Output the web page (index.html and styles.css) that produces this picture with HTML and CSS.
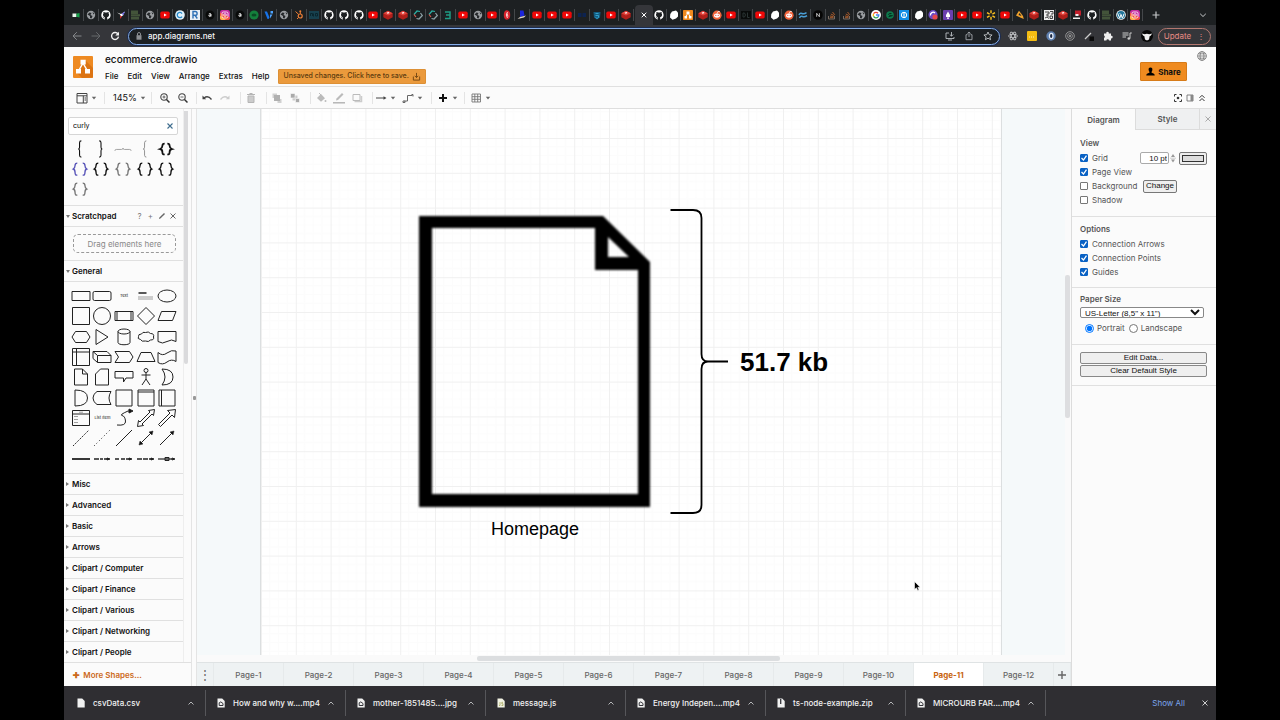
FILE: index.html
```html
<!DOCTYPE html>
<html lang="en">
<head>
<meta charset="utf-8">
<title>ecommerce.drawio</title>
<link rel="stylesheet" href="styles.css">
</head>
<body>
<svg class="sprite" aria-hidden="true">
  <symbol id="globe" viewBox="0 0 10 10"><circle cx="5" cy="5" r="4.2" fill="#9a9da1"/><path d="M1.500 4.500l2-2 2 .5-1 2 2 1-1 2.500-1.500-.5V6zM6.500 2l2 1.500-1 1z" fill="#25282b"/></symbol>
  <symbol id="gh" viewBox="0 0 16 16"><path fill="#fff" d="M8 .5a7.500 7.500 0 0 0-2.400 14.600c.4.1.5-.2.5-.4v-1.500c-2 .5-2.500-.9-2.500-.9-.4-.9-.9-1.100-.9-1.100-.7-.5 0-.5 0-.5.8.1 1.200.8 1.200.8.7 1.200 1.800.9 2.200.7.1-.5.3-.9.500-1.100-1.700-.2-3.400-.8-3.400-3.700 0-.8.3-1.500.8-2-.1-.2-.4-1 .1-2.100 0 0 .6-.2 2.100.8a7 7 0 0 1 3.700 0c1.500-1 2.100-.8 2.100-.8.5 1.100.2 1.900.1 2.100.5.5.8 1.200.8 2 0 2.900-1.700 3.500-3.400 3.700.3.200.5.700.5 1.400v2.100c0 .2.1.5.5.4A7.500 7.500 0 0 0 8 .5z"/></symbol>
  <symbol id="yt" viewBox="0 0 10 10"><rect x=".3" y="1.600" width="9.400" height="6.800" rx="1.600" fill="#f00808"/><path d="M4 3.500L6.800 5 4 6.500z" fill="#fff"/></symbol>
  <symbol id="meet" viewBox="0 0 10 10"><rect x="1.500" y="3.500" width="4" height="3.500" fill="#e8f4ec"/><path d="M5.500 3.500h1L8.500 3v4.500l-2-.5h-1z" fill="#16a34a"/></symbol>
  <symbol id="bird" viewBox="0 0 10 10"><path d="M1 2.500l4 1.500 4-2.500-2 4-2 1-1-2z" fill="#fff"/><path d="M4 6l2 0-1.500 3z" fill="#e33"/><path d="M6 3.500l3-2-2 4z" fill="#5b51d8"/></symbol>
  <symbol id="moss" viewBox="0 0 10 10"><path d="M1 .5h7V4H1zM1 4.300h9v2H1zM1 6.700h8v2.800H1z" fill="#43543a"/></symbol>
  <symbol id="cring" viewBox="0 0 10 10"><circle cx="5" cy="5" r="4.800" fill="#dff0fa"/><path d="M7 3.500a2.600 2.600 0 1 0 0 3" fill="none" stroke="#2387c9" stroke-width="1.300"/></symbol>
  <symbol id="rbox" viewBox="0 0 10 10"><rect width="10" height="10" fill="#e8eef5"/><path d="M3 8.500v-7h2.200a1.900 1.900 0 0 1 0 3.800H3M5 5.300l2.300 3.200" fill="none" stroke="#2d6fb5" stroke-width="1.400"/></symbol>
  <symbol id="adisc" viewBox="0 0 10 10"><circle cx="5" cy="5" r="4.500" fill="#090a0a"/><path d="M3.800 4q1.200-.8 2.200 0v2.500M6 5q-2.300-.2-2.300.9T6 5.800" fill="none" stroke="#fff" stroke-width=".9"/></symbol>
  <symbol id="ig" viewBox="0 0 10 10"><rect width="10" height="10" rx="2.200" fill="#c52fa0"/><path d="M0 2.500l10 5v.3A2.200 2.200 0 0 1 7.800 10H2.200A2.200 2.200 0 0 1 0 7.800z" fill="#f4533c"/><path d="M0 5.500L6 10H2.200A2.200 2.200 0 0 1 0 7.800z" fill="#fdb24a"/><rect x="2" y="2" width="6" height="6" rx="1.500" fill="none" stroke="#fff" stroke-width=".8"/><circle cx="5" cy="5" r="1.300" fill="none" stroke="#fff" stroke-width=".8"/></symbol>
  <symbol id="green" viewBox="0 0 10 10"><circle cx="5" cy="5" r="4.600" fill="#14803c"/><ellipse cx="5" cy="5" rx="2.500" ry="1.500" fill="#0b4a25"/></symbol>
  <symbol id="vee" viewBox="0 0 10 10"><path d="M.5 1.500H3l2.500 6-1 1.500H3.500z" fill="#1873e8"/><path d="M6.500 1h2.500v2.500H6.500zM6 4.500h2.500L6 8.500z" fill="#4da3ff"/></symbol>
  <symbol id="hub" viewBox="0 0 10 10"><g fill="none" stroke="#f07f35"><circle cx="6.200" cy="6" r="2" stroke-width="1.200"/><path d="M1.500 1.500L4.800 4.500M6.300 1v3M3 9l1.700-1.600"/></g><circle cx="6.300" cy="1.200" r="1" fill="#f07f35"/></symbol>
  <symbol id="teal" viewBox="0 0 10 10"><rect y="1" width="10" height="8" fill="#17404e"/><path d="M1.500 6V3.500h2V6m1-2.500v3m2-3h2V6h-2z" fill="none" stroke="#0a262f"/></symbol>
  <symbol id="redis" viewBox="0 0 10 10"><path d="M.3 3.500L5 .8l4.700 2.500v4L5 9.700.3 7.300z" fill="#b01f1a"/><path d="M.3 3.300L5 .8l4.700 2.400L5 5.500z" fill="#e0413a"/><path d="M3.500 2.800l2-.7 1 .8-1.800.8z" fill="#fff"/></symbol>
  <symbol id="swirl" viewBox="0 0 10 10"><path d="M7 1.500L4 1 1 4.500" fill="none" stroke="#2bb0a5" stroke-width="1.200"/><path d="M1 4.500L3 7" fill="none" stroke="#d95a50" stroke-width="1.200"/><path d="M7.500 3L9.300 5.500 6 9 3.500 8.500" fill="none" stroke="#8fa3a8" stroke-width="1.200"/></symbol>
  <symbol id="three" viewBox="0 0 10 10"><path d="M2 2h5v3H3h4v3.500H2" fill="none" stroke="#1e9b84" stroke-width="1.500"/></symbol>
  <symbol id="feather" viewBox="0 0 10 10"><ellipse cx="5" cy="5" rx="3.200" ry="4.700" fill="#d8232c"/><path d="M5.500 2Q3 5 5.500 8M5 3.500l1 3" fill="none" stroke="#fff" stroke-width=".8"/></symbol>
  <symbol id="boat" viewBox="0 0 10 10"><path d="M3 .5h3.500l1 5L3 7z" fill="#1c25dd"/><path d="M.5 9L3 7l6-1.500-2 2z" fill="#ddd2c7"/></symbol>
  <symbol id="navy" viewBox="0 0 10 10"><path d="M1 3h3.500v4H1zM5.500 3H9v4H5.500z" fill="#0d2350"/></symbol>
  <symbol id="shield" viewBox="0 0 10 10"><path d="M1.500 2h7L8 7.500 5 9.500 2 7.500z" fill="#135d82"/><path d="M3.500 3.500h3M3.500 5.500h3v2l-1.500 1-1.500-1" fill="none" stroke="#3bb0dc" stroke-width=".8"/></symbol>
  <symbol id="blob" viewBox="0 0 10 10"><path d="M3 1.500L7 .5l2 2v4L7 8.500 3.500 9.700 1 7.500 1.300 4z" fill="#fff"/></symbol>
  <symbol id="dio" viewBox="0 0 20 20"><rect width="20" height="20" rx="1.500" fill="#f08a1e"/><path d="M10 6L5 14M10 6l5 8" stroke="#fff" stroke-width="2"/><path d="M7 3h6v5H7zM3 12h5v5H3zM12 12h5v5h-5z" fill="#fff"/></symbol>
  <symbol id="reddit" viewBox="0 0 10 10"><circle cx="5" cy="5.200" r="4.600" fill="#f1643c"/><ellipse cx="5" cy="5.600" rx="3" ry="2.100" fill="#fff"/><path d="M5 3.700L6 1.500l2 .2" fill="none" stroke="#fff" stroke-width=".7"/><circle cx="3.800" cy="5.300" r=".6" fill="#e33"/><circle cx="6.200" cy="5.300" r=".6" fill="#e33"/></symbol>
  <symbol id="dark" viewBox="0 0 10 10"><rect y="1" width="10" height="8" fill="#090b0b"/><path d="M2 3v4h1.500L4.500 5 3.500 3zM6.500 2.500v5h2" fill="none" stroke="#2b3434"/></symbol>
  <symbol id="tw" viewBox="0 0 10 10"><path d="M1 5q1-2.500 3-1.500t4.500-.8M1.500 8q1-2.500 3-1.500T9 5.700" fill="none" stroke="#4a9fd6" stroke-width="1.500"/></symbol>
  <symbol id="next" viewBox="0 0 10 10"><circle cx="5" cy="5" r="4.800" fill="#050505"/><path d="M3.700 6.800V3.300l2.700 3.500V3.200" fill="none" stroke="#ddd" stroke-width=".8"/></symbol>
  <symbol id="so" viewBox="0 0 10 10"><path d="M1.500 6v3h6V6" fill="none" stroke="#796c63"/><path d="M3 7.700h3.500M3 6l3.500.6M3.800 4l3.200 1.500M5.500 2l2.300 2.800" stroke="#a85a2b"/></symbol>
  <symbol id="google" viewBox="0 0 10 10"><circle cx="5" cy="5" r="5" fill="#fff"/><g fill="none" stroke-width="1.300"><path d="M7 3.200A2.800 2.800 0 0 0 2.600 3.700" stroke="#ea4335"/><path d="M2.600 3.700a2.800 2.800 0 0 0 0 2.700" stroke="#fbbc05"/><path d="M2.600 6.400A2.800 2.800 0 0 0 7 7" stroke="#34a853"/><path d="M7 7q.8-.8.800-2H5" stroke="#4285f4"/></g></symbol>
  <symbol id="sgreen" viewBox="0 0 10 10"><circle cx="5" cy="5" r="3.800" fill="#0e7a4d"/><path d="M6.500 3.500q-3-.5-3 .8T6.500 5.500 3.500 6.700" fill="none" stroke="#052e20"/></symbol>
  <symbol id="dbox" viewBox="0 0 10 10"><rect width="10" height="10" fill="#128fe6"/><circle cx="5" cy="5" r="2.700" fill="none" stroke="#fff"/><path d="M5 2v6" stroke="#fff"/></symbol>
  <symbol id="purp" viewBox="0 0 10 10"><circle cx="5" cy="4.700" r="4.600" fill="#6b4bc4"/><path d="M2.500 5.500A2.700 2.700 0 0 1 7 3" fill="none" stroke="#fff" stroke-width="1.300"/><circle cx="7" cy="7" r="2.600" fill="#e5484d"/></symbol>
  <symbol id="bell" viewBox="0 0 10 10"><rect width="10" height="10" rx="1" fill="#6b3fae"/><path d="M5 1.500L7 5v2H3V5zM4 7.500h2v1.200H4z" fill="#fff"/></symbol>
  <symbol id="spark" viewBox="0 0 10 10"><path d="M5 .3v3M5 6.700v3M1 2.700l2.600 1.500M6.400 5.800L9 7.300M1 7.300l2.600-1.500M6.400 4.200L9 2.700" stroke="#ffc220" stroke-width="1.400"/></symbol>
  <symbol id="tri" viewBox="0 0 10 10"><path d="M1 5.500L4 .7 8 6l.8 3-3-1.200z" fill="#f0a22d"/><path d="M3.500 5L4.500 3l2 3z" fill="#1d2124"/></symbol>
  <symbol id="qr" viewBox="0 0 10 10"><rect width="10" height="10" fill="#eee"/><path d="M1 2h4v2H3v2h2M6 1.500h3V4H7M1 8l2-1 2 1.500M6 6h2.500v2.500H6z" fill="none" stroke="#333" stroke-width=".9"/></symbol>
  <symbol id="rw" viewBox="0 0 10 10"><path d="M3 .5h6v5H3z" fill="#c2202c"/><path d="M3.500 4h3v2h-3zM1 7.500h7v1.500H1z" fill="#eee"/></symbol>
  <symbol id="wp" viewBox="0 0 10 10"><circle cx="5" cy="5" r="4.800" fill="#fff"/><circle cx="5" cy="5" r="4" fill="#21759b"/><path d="M1.700 3.300l2 5L5 4.500l1.400 3.700 1.700-4.500M3.700 3.300l1 1" fill="none" stroke="#fff"/></symbol>
  <symbol id="caret" viewBox="0 0 6 6"><path d="M.8 1.800h4.400L3 4.500z" fill="#666"/></symbol>
  <symbol id="up" viewBox="0 0 8 8"><path d="M1.500 5.500L4 3l2.500 2.500" fill="none" stroke="#b5b6b9"/></symbol>
  <symbol id="file" viewBox="0 0 8 10"><path d="M.5.5h4.700L7.700 3v6.500H.5z" fill="#f1f1f1"/></symbol>
  <symbol id="media" viewBox="0 0 8 10"><path d="M.5.5h4.700L7.700 3v6.500H.5z" fill="#f1f1f1"/><path d="M2.200 7.500V4.800l1.600-.9 2.200 1.600v2z" fill="none" stroke="#34343a"/></symbol>
  <symbol id="script" viewBox="0 0 8 10"><path d="M.5.5h4.700L7.700 3v6.500H.5z" fill="#f3f3e4"/><path d="M3 4v3.500H2M6 4.300H4.800v1.500H6v1.700H4.500" fill="none" stroke="#a3a65a" stroke-width=".8"/></symbol>
  <symbol id="zip" viewBox="0 0 8 10"><path d="M.5.5h4.700L7.700 3v6.500H.5z" fill="#f1f1f1"/><path d="M3.700 1v5" stroke="#34343a" stroke-width="1.300"/></symbol>
  <symbol id="braces" viewBox="0 0 20 16"><path d="M7 1.500Q4.500 1.500 4.500 4T2.500 8q2 .5 2 4T7 14.500M13 1.500q2.500 0 2.500 2.500T17.500 8q-2 .5-2 4T13 14.500" fill="none" stroke="currentColor" stroke-width="1.500"/></symbol>
  <symbol id="braces-bold" viewBox="0 0 20 16"><path d="M8.500 2Q6 2 6 4.500T3.500 8Q6 8.500 6 11.500T8.500 14M11.500 2Q14 2 14 4.500T16.500 8q-2.500.5-2.500 3.500T11.500 14" fill="none" stroke="currentColor" stroke-width="2"/></symbol>
</svg>

<div class="screen">
  <nav class="tabstrip" aria-label="Browser tabs">
    <div class="tabs tabs-a">
      <button><svg><use href="#meet"/></svg></button><button><svg><use href="#globe"/></svg></button><button><svg><use href="#gh"/></svg></button><button><svg><use href="#bird"/></svg></button><button><svg><use href="#moss"/></svg></button><button><svg><use href="#globe"/></svg></button><button><svg><use href="#yt"/></svg></button><button><svg><use href="#cring"/></svg></button><button><svg><use href="#rbox"/></svg></button><button><svg><use href="#adisc"/></svg></button>
      <button><svg><use href="#ig"/></svg></button><button><svg><use href="#adisc"/></svg></button><button><svg><use href="#green"/></svg></button><button><svg><use href="#vee"/></svg></button><button><svg><use href="#globe"/></svg></button><button><svg><use href="#hub"/></svg></button><button><svg><use href="#teal"/></svg></button><button><svg><use href="#gh"/></svg></button><button><svg><use href="#gh"/></svg></button><button><svg><use href="#gh"/></svg></button>
      <button><svg><use href="#yt"/></svg></button><button><svg><use href="#redis"/></svg></button><button><svg><use href="#redis"/></svg></button><button><svg><use href="#swirl"/></svg></button><button><svg><use href="#swirl"/></svg></button><button><svg><use href="#three"/></svg></button><button><svg><use href="#yt"/></svg></button><button><svg><use href="#globe"/></svg></button><button><svg><use href="#yt"/></svg></button><button><svg><use href="#feather"/></svg></button>
      <button><svg><use href="#boat"/></svg></button><button><svg><use href="#yt"/></svg></button><button><svg><use href="#yt"/></svg></button><button><svg><use href="#yt"/></svg></button><button><svg><use href="#navy"/></svg></button><button><svg><use href="#shield"/></svg></button><button><svg><use href="#yt"/></svg></button><button><svg><use href="#redis"/></svg></button>
    </div>
    <button class="tab-active" aria-label="Close tab"><svg viewBox="0 0 10 10"><path d="M2.700 2.700l4.600 4.600M7.300 2.700L2.700 7.300" stroke="#fff"/></svg></button>
    <div class="tabs tabs-b">
      <button><svg><use href="#gh"/></svg></button><button><svg><use href="#blob"/></svg></button><button><svg><use href="#dio"/></svg></button><button><svg><use href="#redis"/></svg></button><button><svg><use href="#reddit"/></svg></button><button><svg><use href="#yt"/></svg></button><button><svg><use href="#dark"/></svg></button><button><svg><use href="#yt"/></svg></button><button><svg><use href="#blob"/></svg></button><button><svg><use href="#reddit"/></svg></button>
      <button><svg><use href="#tw"/></svg></button><button><svg><use href="#next"/></svg></button><button><svg><use href="#so"/></svg></button><button><svg><use href="#so"/></svg></button><button><svg><use href="#globe"/></svg></button><button><svg><use href="#google"/></svg></button><button><svg><use href="#sgreen"/></svg></button><button><svg><use href="#dbox"/></svg></button><button><svg><use href="#blob"/></svg></button><button><svg><use href="#purp"/></svg></button>
      <button><svg><use href="#bell"/></svg></button><button><svg><use href="#yt"/></svg></button><button><svg><use href="#yt"/></svg></button><button><svg><use href="#spark"/></svg></button><button><svg><use href="#yt"/></svg></button><button><svg><use href="#tri"/></svg></button><button><svg><use href="#redis"/></svg></button><button><svg><use href="#qr"/></svg></button><button><svg><use href="#redis"/></svg></button><button><svg><use href="#rw"/></svg></button>
      <button><svg><use href="#gh"/></svg></button><button><svg><use href="#moss"/></svg></button><button><svg><use href="#wp"/></svg></button><button><svg><use href="#ig"/></svg></button>
    </div>
    <div class="tabs-end">
      <button aria-label="New tab"><svg viewBox="0 0 10 10"><path d="M5 1.500v7M1.500 5h7" stroke="#c6c8ca" stroke-width="1.200"/></svg></button>
      <button aria-label="Search tabs"><svg viewBox="0 0 10 10"><path d="M2.200 3.800L5 6.500l2.800-2.700" fill="none" stroke="#c6c8ca"/></svg></button>
    </div>
  </nav>

  <div class="addressbar">
    <button aria-label="Back"><svg viewBox="0 0 10 10"><path d="M9.500 5H1M4.800 1.200L1 5l3.800 3.800" fill="none" stroke="#85878a"/></svg></button>
    <button aria-label="Forward"><svg viewBox="0 0 10 10"><path d="M.5 5H9M5.200 1.200L9 5 5.200 8.800" fill="none" stroke="#66686b"/></svg></button>
    <button aria-label="Reload"><svg viewBox="0 0 10 10"><path d="M8 3A3.500 3.500 0 1 0 8.500 5.700" fill="none" stroke="#f1f1f1" stroke-width="1.400"/><path d="M9 .8v3.700H5.300z" fill="#f1f1f1"/></svg></button>
    <div class="omnibox">
      <svg viewBox="0 0 10 10"><rect x="2.500" y="4.200" width="5" height="4.500" fill="#8d9094"/><path d="M3.500 4.500V3a1.500 1.500 0 0 1 3 0v1.500" fill="none" stroke="#8d9094"/></svg>
      <input type="text" aria-label="Address" value="app.diagrams.net">
      <button aria-label="Install"><svg viewBox="0 0 10 10"><path d="M4 2H1v5.500h8V6M3 9h4M6.500 1v4M4.800 3.500l1.700 1.700 1.700-1.700" fill="none" stroke="#b9bdc2" stroke-width=".9"/></svg></button>
      <button aria-label="Share page"><svg viewBox="0 0 10 10"><path d="M3.500 3.700H2v5h6v-5H6.500M5 6V1M3.400 2.500L5 1l1.600 1.500" fill="none" stroke="#a2a6aa" stroke-width=".9"/></svg></button>
      <button aria-label="Bookmark"><svg viewBox="0 0 10 10"><path d="M5 1l1.200 2.700 2.900.3-2.200 1.900.7 2.800L5 7.200 2.400 8.700l.7-2.800L.9 4l2.900-.3z" fill="none" stroke="#c3c7cb" stroke-width=".9"/></svg></button>
    </div>
    <div class="extensions">
      <button aria-label="React tools"><svg viewBox="0 0 10 10"><g fill="none" stroke="#c9cacc" stroke-width=".8"><ellipse cx="5" cy="5" rx="4.500" ry="1.800"/><ellipse cx="5" cy="5" rx="4.500" ry="1.800" transform="rotate(60 5 5)"/><ellipse cx="5" cy="5" rx="4.500" ry="1.800" transform="rotate(120 5 5)"/></g></svg></button>
      <button aria-label="Notes"><svg viewBox="0 0 10 10"><rect width="10" height="10" rx="1" fill="#f5bd13"/><path d="M2 6h6" stroke="#fff2b0" stroke-dasharray="1 1"/></svg></button>
      <button aria-label="Extension"><svg viewBox="0 0 10 10"><circle cx="5" cy="5" r="4.700" fill="#5e7fae"/><ellipse cx="5.200" cy="5" rx="1.800" ry="2.600" fill="#1b2740" stroke="#e4ecf8" stroke-width="1.300"/></svg></button>
      <button aria-label="Target"><svg viewBox="0 0 10 10"><circle cx="5" cy="5" r="4.300" fill="none" stroke="#aaa" stroke-width=".8"/><circle cx="5" cy="5" r="2.400" fill="none" stroke="#aaa" stroke-width=".7"/><circle cx="5" cy="5" r="1" fill="#aaa"/></svg></button>
      <button aria-label="Picker"><svg viewBox="0 0 10 10"><path d="M1 8l6-6" stroke="#ccc" stroke-width="1.200"/><rect x="5.500" y="5.500" width="4.500" height="4.500" fill="#0b0b0b"/></svg></button>
      <button aria-label="Extensions"><svg viewBox="0 0 10 10"><path d="M1 2.500h2.300a1.300 1.300 0 1 1 2.500 0H8v2.300a1.300 1.300 0 1 1 0 2.500v2.200H6a1.300 1.300 0 0 0-2.600 0H1V7a1.300 1.300 0 0 0 0-2.400z" fill="#eee"/></svg></button>
      <button aria-label="Media"><svg viewBox="0 0 10 10"><path d="M.5 2h6M.5 4h6M.5 6h3.500M8 7.500V2h1.800" fill="none" stroke="#ccc"/><circle cx="6.800" cy="7.500" r="1.300" fill="#ccc"/></svg></button>
      <button aria-label="Profile"><svg viewBox="0 0 12 12"><circle cx="6" cy="6" r="6" fill="#060606"/><path d="M.8 3.500l3 .7q2-1 4.400 0l3-.7-1.500 2.300-1 .2L8 9.500 6 10.500 4 9.500 3.300 6l-1-.2z" fill="#eee"/></svg></button>
    </div>
    <button class="update">Update <span>⋮</span></button>
  </div>

  <header class="apphead">
    <svg class="logo" viewBox="0 0 20 22"><rect width="20" height="22" rx="1" fill="#ee8a22"/><path d="M12 4l8 8v9.500L9 22l-5-5z" fill="#dc7413"/><path d="M10 7L5.500 15M10 7l4.500 8" stroke="#fff" stroke-width="1.500"/><path d="M7.500 3.800h5.200v4.700H7.500zM3 13h5v4.500H3zM12 13h5v4.500h-5z" fill="#fff"/></svg>
    <div class="titles">
      <a class="doctitle" href="#">ecommerce.drawio</a>
      <div class="menubar">
        <button>File</button><button>Edit</button><button>View</button><button>Arrange</button><button>Extras</button><button>Help</button>
        <button class="unsaved">Unsaved changes. Click here to save. <svg viewBox="0 0 10 10"><path d="M1.500 5v4h7V5M5 1v5M3 4.200l2 2 2-2" fill="none" stroke="#6d4210"/></svg></button>
      </div>
    </div>
    <button class="share"><svg viewBox="0 0 10 10"><path d="M5 .5c2 0 2.300 1.500 2 3Q6.700 5 6.200 5.300v1C8.500 7 9.700 7.200 9.700 9.500H.3c0-2.300 1.200-2.500 3.500-3.200v-1Q3.300 5 3 3.500C2.700 2 3 .5 5 .5z"/></svg>Share</button>
    <button class="lang" aria-label="Language"><svg viewBox="0 0 10 10"><g fill="none" stroke="#777" stroke-width=".8"><circle cx="5" cy="5" r="4.400"/><ellipse cx="5" cy="5" rx="2" ry="4.400"/><path d="M.6 5h8.800M1.300 2.800h7.400M1.300 7.200h7.400"/></g></svg></button>
  </header>

  <div class="toolbar">
    <div class="group"><button class="drop first" aria-label="View"><svg viewBox="0 0 12 12"><path d="M1 1.500h10v9.500H1zM1 3.800h10M7.300 3.800V11M8.500 6H10M8.500 8H10" fill="none" stroke="#444"/></svg><svg class="car"><use href="#caret"/></svg></button></div>
    <div class="group wide"><button class="drop zoom">145%<svg class="car"><use href="#caret"/></svg></button></div>
    <div class="group"><button aria-label="Zoom in"><svg viewBox="0 0 12 12"><circle cx="5" cy="5" r="3.200" fill="none" stroke="#444" stroke-width="1.100"/><path d="M7.500 7.500l3 3" stroke="#333" stroke-width="1.500"/><path d="M3.500 5h3M5 3.500v3" stroke="#444" stroke-width=".8"/></svg></button><button aria-label="Zoom out"><svg viewBox="0 0 12 12"><circle cx="5" cy="5" r="3.200" fill="none" stroke="#444" stroke-width="1.100"/><path d="M7.500 7.500l3 3" stroke="#333" stroke-width="1.500"/><path d="M3.500 5h3" stroke="#444" stroke-width=".8"/></svg></button></div>
    <div class="group snug"><button aria-label="Undo"><svg viewBox="0 0 12 12"><path d="M3 6q4-3 7.500 1.500" fill="none" stroke="#444" stroke-width="1.300"/><path d="M1.500 3.500v3.700h3.700z" fill="#444"/></svg></button><button aria-label="Redo"><svg viewBox="0 0 12 12"><path d="M9 6Q5 3 1.500 7.500" fill="none" stroke="#ccc" stroke-width="1.300"/><path d="M10.500 3.500v3.700H6.800z" fill="#ccc"/></svg></button></div>
    <div class="group snug"><button aria-label="Delete"><svg viewBox="0 0 12 12"><path d="M2 2.500h8M4.500 1.500h3M3 4h6v6.500H3z" fill="#ccc" stroke="#b5b5b5"/></svg></button></div>
    <div class="group snug"><button aria-label="To front"><svg viewBox="0 0 12 12"><path d="M1.500 1.500h4.500v4.500H1.500zM6.500 7h4v4h-4z" fill="#d0d0d0"/><path d="M3 3h6v6H3z" fill="#b0b0b0"/></svg></button><button aria-label="To back"><svg viewBox="0 0 12 12"><path d="M3.500 3.500h5v5h-5z" fill="#ccc"/><path d="M1.500 1.500h4.500v4.500H1.500zM6.500 6.500h4v4h-4z" fill="#aaa" stroke="#fbfbfb" stroke-width=".6"/></svg></button></div>
    <div class="group snug"><button aria-label="Fill"><svg viewBox="0 0 12 12"><path d="M2 6l4-4 4 4.300-4 3.500z" fill="#bbb"/><path d="M4 1l3 3" stroke="#bbb"/><circle cx="10.500" cy="9" r="1" fill="#bbb"/></svg></button><button aria-label="Line"><svg viewBox="0 0 12 12"><path d="M3 8.500l.5-2L9 1l1.500 1.500L5 8z" fill="#bbb"/><path d="M0 10.800h12" stroke="#b0b0b0" stroke-width="1.400"/></svg></button><button aria-label="Shadow"><svg viewBox="0 0 12 12"><path d="M3.500 9.500h7V4" fill="none" stroke="#ccc" stroke-width="1.500"/><path d="M2 2.500h7v6H2z" fill="none" stroke="#bbb"/></svg></button></div>
    <div class="group snug"><button class="drop" aria-label="Connection"><svg viewBox="0 0 12 12"><path d="M1 6h8.500" stroke="#444"/><path d="M8.500 4.200L11.500 6l-3 1.800z" fill="#444"/></svg><svg class="car"><use href="#caret"/></svg></button><button class="drop" aria-label="Waypoints"><svg viewBox="0 0 12 12"><path d="M2.500 9H5.500V3.500h5M1 9h2v1.500H1zM9.500 2.500h1.500v2" fill="none" stroke="#666"/></svg><svg class="car"><use href="#caret"/></svg></button></div>
    <div class="group"><button class="drop" aria-label="Insert"><svg viewBox="0 0 12 12"><path d="M6 2v8M2 6h8" stroke="#111" stroke-width="2"/></svg><svg class="car"><use href="#caret"/></svg></button></div>
    <div class="group last"><button class="drop" aria-label="Table"><svg viewBox="0 0 12 12"><path d="M2 2h8.500v8H2zM2 4.700h8.500M2 7.300h8.500M4.800 2v8M7.700 2v8" fill="none" stroke="#777" stroke-width=".9"/></svg><svg class="car"><use href="#caret"/></svg></button></div>
    <div class="tools-right"><button aria-label="Fullscreen"><svg viewBox="0 0 10 10"><path d="M1.500 3.500v-2h2M6.500 1.500h2v2M8.500 6.500v2h-2M3.500 8.500h-2v-2" fill="none" stroke="#333"/><circle cx="5" cy="5" r="1.300" fill="#333"/></svg></button><button aria-label="Format panel"><svg viewBox="0 0 10 10"><path d="M2 2h6v6H2z" fill="none" stroke="#666" stroke-width=".8"/><path d="M5.500 2h2.500v6H5.500z" fill="#888"/></svg></button><button aria-label="Collapse"><svg viewBox="0 0 10 10"><path d="M2.500 4.800L5 2.300l2.500 2.500M2.500 8L5 5.500 7.500 8" fill="none" stroke="#333"/></svg></button></div>
  </div>

  <main class="work">
    <aside class="sidebar">
      <div class="palette">
        <div class="panes">
          <div class="search"><input type="text" aria-label="Search shapes" value="curly"><button aria-label="Clear search"><svg viewBox="0 0 8 8"><path d="M1.500 1.500l5 5M6.500 1.500l-5 5" stroke="#3f6d8e" stroke-width="1.100"/></svg></button></div>
          <div class="results">
            <button><svg viewBox="0 0 20 20"><path d="M11.500 1q-2 0-2 2v5q0 2-1.500 2 1.500 0 1.500 2v5q0 2 2 2" fill="none" stroke="#111" stroke-width="1.200"/></svg></button>
            <button><svg viewBox="0 0 20 20"><path d="M8 1q2 0 2 2v5q0 2 1.500 2-1.500 0-1.500 2v5q0 2-2 2" fill="none" stroke="#111" stroke-width="1.200"/></svg></button>
            <button><svg viewBox="0 0 20 20"><path d="M1 12q0-1.500 1.500-1.500h6q1.500 0 1.500-1.500 0 1.500 1.500 1.500h6q1.500 0 1.500 1.500" fill="none" stroke="#999"/></svg></button>
            <button><svg viewBox="0 0 20 20"><path d="M11.500 1q-2 0-2 2v5q0 2-1.500 2 1.500 0 1.500 2v5q0 2 2 2" fill="none" stroke="#888"/></svg></button>
            <button><svg><use href="#braces-bold"/></svg></button>
            <button class="blue"><svg><use href="#braces"/></svg></button>
            <button><svg><use href="#braces"/></svg></button>
            <button class="grey"><svg><use href="#braces"/></svg></button>
            <button><svg><use href="#braces"/></svg></button>
            <button><svg><use href="#braces"/></svg></button>
            <button class="grey"><svg><use href="#braces"/></svg></button>
          </div>
          <h2 class="section open">Scratchpad<span class="sect-tools"><button aria-label="Help">?</button><button aria-label="Add">+</button><button aria-label="Edit"><svg viewBox="0 0 8 8"><path d="M1 7l.4-1.500L6 1l1 1-4.600 4.600z" fill="#666"/></svg></button><button aria-label="Close"><svg viewBox="0 0 8 8"><path d="M1.500 1.500l5 5M6.500 1.500l-5 5" stroke="#666"/></svg></button></span></h2>
          <div class="scratch"><div class="dropzone">Drag elements here</div></div>
          <h2 class="section open">General</h2>
          <div class="shapes">
            <button><svg viewBox="0 0 20 20"><path d="M1 5.500h18v9H1z"/></svg></button>
            <button><svg viewBox="0 0 20 20"><rect x="1" y="5.500" width="18" height="9" rx="1.500"/></svg></button>
            <button class="mini">Text</button>
            <button><svg viewBox="0 0 20 20"><path d="M2.500 7h8" stroke-width="1.500"/><path d="M2 11h15M2 13h15" stroke="#888" stroke-width=".8"/></svg></button>
            <button><svg viewBox="0 0 20 20"><ellipse cx="10" cy="10" rx="9" ry="6"/></svg></button>

            <button><svg viewBox="0 0 20 20"><path d="M1.500 1.500h17v17h-17z"/></svg></button>
            <button><svg viewBox="0 0 20 20"><circle cx="10" cy="10" r="8.500"/></svg></button>
            <button><svg viewBox="0 0 20 20"><path d="M1 5.500h18v9H1zM3 5.500v9M17 5.500v9"/></svg></button>
            <button><svg viewBox="0 0 20 20"><path d="M10 1.500l8.500 8.500-8.500 8.500L1.500 10z"/></svg></button>
            <button><svg viewBox="0 0 20 20"><path d="M4.500 5.500H19l-3.500 9H1z"/></svg></button>

            <button><svg viewBox="0 0 20 20"><path d="M4.500 4.500h11L19 10l-3.500 5.500h-11L1 10z"/></svg></button>
            <button><svg viewBox="0 0 20 20"><path d="M4 2.500L16 10 4 17.500z"/></svg></button>
            <button><svg viewBox="0 0 20 20"><path d="M4 4.500v11c0 3 12 3 12 0v-11"/><ellipse cx="10" cy="4.500" rx="6" ry="2.500"/></svg></button>
            <button><svg viewBox="0 0 20 20"><path d="M5.500 7q1-2.500 4-1.500 3-1.500 5 1 4 0 3 3.500 1 3-3 3-2 2.500-5 1-4 1-5-1.500Q1 12 2.500 9.500 2 7 5.500 7z"/></svg></button>
            <button><svg viewBox="0 0 20 20"><path d="M1 4.500h18v10q-4.500-3-9 0t-9 0z"/></svg></button>

            <button><svg viewBox="0 0 20 20"><path d="M1.500 1.500h17v17h-17zM1.500 5h17M5.500 1.500v17"/></svg></button>
            <button><svg viewBox="0 0 20 20"><path d="M1 4.500h14l4 4v7H5.500L1 11.500zM1 4.500l4.500 4H19M5.500 8.500v7"/></svg></button>
            <button><svg viewBox="0 0 20 20"><path d="M1 4.500h14.500L19 10l-3.500 5.500H1L4.500 10z"/></svg></button>
            <button><svg viewBox="0 0 20 20"><path d="M5 5.500h10l4 9H1z"/></svg></button>
            <button><svg viewBox="0 0 20 20"><path d="M1 5.500q4.500 4 9 .5t9-2v10.500q-4.500-3-9 .5t-9 .5z"/></svg></button>

            <button><svg viewBox="0 0 20 20"><path d="M3.500 2h8l5 5v11h-13zM11.500 2v5h5"/></svg></button>
            <button><svg viewBox="0 0 20 20"><path d="M8.500 2h8v16h-13V7z"/></svg></button>
            <button><svg viewBox="0 0 20 20"><path d="M1 4.500h18V11h-7l-2.500 4V11H1z"/></svg></button>
            <button><svg viewBox="0 0 20 20"><circle cx="10" cy="3.500" r="2"/><path d="M10 5.500V12M5.500 8h9M10 12l-4 6M10 12l4 6"/></svg></button>
            <button><svg viewBox="0 0 20 20"><path d="M5 2q11 0 11 8T5 18q6-8 0-16z"/></svg></button>

            <button><svg viewBox="0 0 20 20"><path d="M4 2q12.500 0 12.500 8T4 18z"/></svg></button>
            <button><svg viewBox="0 0 20 20"><path d="M5 3.500h14q-4 6.500 0 13H5Q1 14 1 10t4-6.500z"/></svg></button>
            <button><svg viewBox="0 0 20 20"><path d="M2 2h16v16H2z"/></svg></button>
            <button><svg viewBox="0 0 20 20"><path d="M2 2h16v16H2zM2 4h16"/></svg></button>
            <button><svg viewBox="0 0 20 20"><path d="M2 2h16v16H2zM4.500 2v16"/></svg></button>

            <button><svg viewBox="0 0 20 20"><path d="M1.500 2.500h17v15h-17zM1.500 6h17"/><path d="M8 4.200h4M3 8.500h4M3 11.500h4M3 14.500h4" stroke="#777" stroke-width=".7"/></svg></button>
            <button class="mini">List Item</button>
            <button><svg viewBox="0 0 20 20"><path d="M3 17q9 1 8.500-4T8 7.500 14 3h3"/><path d="M15 1l4 2-4 2z" fill="#111"/></svg></button>
            <button><svg viewBox="0 0 20 20"><path d="M1.500 18.500l1-6 1.500 1.500L14 4l-1.500-1.500 6-1-1 6L16 6 6 16l1.500 1.500z"/></svg></button>
            <button><svg viewBox="0 0 20 20"><path d="M1.500 16.500L13 5l-2.500-2.500 8-1-1 8L15 7 3.500 18.500z"/></svg></button>

            <button><svg viewBox="0 0 20 20"><path d="M2 18L18 2" stroke-dasharray="1.500 1"/></svg></button>
            <button><svg viewBox="0 0 20 20"><path d="M2 18L18 2" stroke-dasharray="1 2.500"/></svg></button>
            <button><svg viewBox="0 0 20 20"><path d="M2 18L18 2"/></svg></button>
            <button><svg viewBox="0 0 20 20"><path d="M5 15L15 5"/><path d="M3 17l1-4 3 3zM17 3l-1 4-3-3z" fill="#111" stroke-width=".5"/></svg></button>
            <button><svg viewBox="0 0 20 20"><path d="M3 17L15 5"/><path d="M17 3l-1 4-3-3z" fill="#111" stroke-width=".5"/></svg></button>

            <button><svg viewBox="0 0 20 20"><path d="M1 10h18" stroke-width="1.800"/></svg></button>
            <button><svg viewBox="0 0 20 20"><path d="M2 10h5M8 10h3M12 10h5" stroke-width="1.300"/><path d="M15 9l3 1-3 1z" fill="#111"/></svg></button>
            <button><svg viewBox="0 0 20 20"><path d="M1 10h4M7 10h4M12 10h5" stroke-width="1.500"/><path d="M15 9l3 1-3 1z" fill="#111"/></svg></button>
            <button><svg viewBox="0 0 20 20"><path d="M1 10h5M7 10h5M13 10h3" stroke-width="1.500"/><path d="M15 9l3 1-3 1z" fill="#111"/></svg></button>
            <button><svg viewBox="0 0 20 20"><path d="M1 10h16" stroke-width="1.200"/><path d="M8 8.500h4v3H8zM15 9l3 1-3 1z" fill="#666"/></svg></button>
          </div>
          <h2 class="section">Misc</h2>
          <h2 class="section">Advanced</h2>
          <h2 class="section">Basic</h2>
          <h2 class="section">Arrows</h2>
          <h2 class="section">Clipart / Computer</h2>
          <h2 class="section">Clipart / Finance</h2>
          <h2 class="section">Clipart / Various</h2>
          <h2 class="section">Clipart / Networking</h2>
          <h2 class="section">Clipart / People</h2>
        </div>
        <div class="vtrack"><div class="vthumb"></div></div>
      </div>
      <button class="more"><b>+</b> More Shapes...</button>
    </aside>
    <div class="splitter"><span></span></div>

    <section class="center">
      <div class="canvas">
        <svg class="page">
          <defs>
            <pattern id="grid" width="34.800" height="34.800" patternUnits="userSpaceOnUse" y="29">
              <path d="M8.700 0v34.800M17.400 0v34.800M26.100 0v34.800M0 8.700h34.800M0 17.400h34.800M0 26.100h34.800" stroke="#fcfcfc" fill="none"/>
              <path d="M.5 0v34.800M0 .5h34.800" stroke="#f0f0f0" fill="none"/>
            </pattern>
            <filter id="soft"><feGaussianBlur stdDeviation=".8"/></filter>
          </defs>
          <rect width="100%" height="100%" fill="url(#grid)"/>
          <path d="M158 107H342L389 153V398H158zM171 119V385H377V161H334V119zM347 128V148H368z" fill-rule="evenodd" filter="url(#soft)"/>
          <path d="M409.500 101H432Q440.500 101 440.500 109V245Q440.500 252.500 447 252.500H467M447 252.500Q440.500 252.500 440.500 260V396Q440.500 404 432 404H409.500" fill="none" stroke="#000" stroke-width="1.800"/>
          <text x="274" y="426" class="caption">Homepage</text>
          <text x="479" y="262" class="size">51.7 kb</text>
          <path d="M653.500 472.500v8l1.900-1.700 1.300 2.700 1.300-.6-1.200-2.600h2.400z" stroke="#fff" stroke-width=".6"/>
        </svg>
        <div class="vscroll"><div></div></div>
        <div class="hscroll"><div></div></div>
      </div>
      <nav class="pages">
        <button class="pmenu" aria-label="Pages">⋮</button>
        <button>Page-1</button><button>Page-2</button><button>Page-3</button><button>Page-4</button><button>Page-5</button><button>Page-6</button><button>Page-7</button><button>Page-8</button><button>Page-9</button><button>Page-10</button><button class="on">Page-11</button><button>Page-12</button>
        <button class="padd" aria-label="Insert page"><svg viewBox="0 0 10 10"><path d="M5 1v8M1 5h8" stroke="#666" stroke-width="1.400"/></svg></button>
      </nav>
    </section>

    <aside class="format">
      <div class="ftabs"><button class="on">Diagram</button><button>Style</button><button class="fclose" aria-label="Close panel"><svg viewBox="0 0 8 8"><path d="M1.500 1.500l5 5M6.500 1.500l-5 5" stroke="#aaa"/></svg></button></div>
      <section class="view">
        <h3>View</h3>
        <div class="row"><label><input type="checkbox" checked>Grid</label><span class="unit"><input type="text" aria-label="Grid size" value="10 pt"><svg viewBox="0 0 6 12"><path d="M1 5l2-3 2 3zM1 7.500l2 3 2-3z" fill="#999"/><path d="M0 6.200h6" stroke="#ccc"/></svg></span><button class="swatch" aria-label="Grid color"><i></i></button></div>
        <div class="row"><label><input type="checkbox" checked>Page View</label></div>
        <div class="row"><label><input type="checkbox">Background</label><button class="change">Change</button></div>
        <div class="row"><label><input type="checkbox">Shadow</label></div>
      </section>
      <section>
        <h3>Options</h3>
        <div class="row"><label><input type="checkbox" checked>Connection Arrows</label></div>
        <div class="row"><label><input type="checkbox" checked>Connection Points</label></div>
        <div class="row"><label><input type="checkbox" checked>Guides</label></div>
      </section>
      <section class="paper">
        <h3><label for="paper">Paper Size</label></h3>
        <select id="paper"><option>US-Letter (8,5" x 11")</option></select>
        <div class="radios"><label><input type="radio" name="o" checked>Portrait</label><label><input type="radio" name="o">Landscape</label></div>
      </section>
      <section class="actions"><button>Edit Data...</button><button>Clear Default Style</button></section>
    </aside>
  </main>

  <footer class="downloads">
    <div class="dl"><svg class="fi"><use href="#file"/></svg><a href="#">csvData.csv</a><button aria-label="Options"><svg><use href="#up"/></svg></button></div>
    <div class="dl"><svg class="fi"><use href="#media"/></svg><a href="#">How and why w....mp4</a><button aria-label="Options"><svg><use href="#up"/></svg></button></div>
    <div class="dl"><svg class="fi"><use href="#media"/></svg><a href="#">mother-1851485....jpg</a><button aria-label="Options"><svg><use href="#up"/></svg></button></div>
    <div class="dl"><svg class="fi"><use href="#script"/></svg><a href="#">message.js</a><button aria-label="Options"><svg><use href="#up"/></svg></button></div>
    <div class="dl"><svg class="fi"><use href="#media"/></svg><a href="#">Energy Indepen....mp4</a><button aria-label="Options"><svg><use href="#up"/></svg></button></div>
    <div class="dl"><svg class="fi"><use href="#zip"/></svg><a href="#">ts-node-example.zip</a><button aria-label="Options"><svg><use href="#up"/></svg></button></div>
    <div class="dl"><svg class="fi"><use href="#media"/></svg><a href="#">MICROURB FAR....mp4</a><button aria-label="Options"><svg><use href="#up"/></svg></button></div>
    <a class="showall" href="#">Show All</a>
    <button class="dlclose" aria-label="Close"><svg viewBox="0 0 8 8"><path d="M1.500 1.500l5 5M6.500 1.500l-5 5" stroke="#ccc"/></svg></button>
  </footer>
</div>
</body>
</html>
```
FILE: styles.css
```css
* { box-sizing: border-box; }
body { margin: 0; background: #000; font: 8px/12px Inter, "Liberation Sans", sans-serif; color: #111; }
button { margin: 0; padding: 0; border: 0; background: none; font: inherit; color: inherit; display: flex; align-items: center; justify-content: center; flex-shrink: 0; }
input { font: inherit; margin: 0; }
a { color: inherit; text-decoration: none; }
svg { display: block; flex-shrink: 0; }
.sprite { position: absolute; width: 0; height: 0; }
.screen { margin: 0 64px; height: 100vh; display: flex; flex-direction: column; background: #fbfbfb; overflow: hidden; }

/* browser chrome */
.tabstrip { height: 25px; flex-shrink: 0; display: flex; padding: 5px 0 0 5px; background: #1d2022; }
.tabs { display: flex; align-items: center; min-width: 0; }
.tabs-a { flex: 565 1 0; }
.tabs-b { flex: 490 1 0; }
.tabs button { flex: 1 1 0; min-width: 0; height: 12px; border-right: 1px solid #44474a; }
.tabs svg { width: 10px; height: 10px; }
.tab-active { width: 18px; background: #35363a; border-radius: 4px 4px 0 0; }
.tab-active svg { width: 10px; }
.tabs-end { width: 73px; display: flex; justify-content: space-between; padding: 0 8px; }
.tabs-end svg { width: 10px; }
.addressbar { height: 22px; flex-shrink: 0; display: flex; align-items: center; background: #35363a; padding: 0 5px 0 7px; }
.addressbar > button { width: 11px; margin-right: 8px; }
.addressbar > button svg { width: 10px; }
.omnibox { flex: 1; min-width: 0; height: 17px; display: flex; align-items: center; gap: 9px; padding: 0 6px 0 5px; background: #1c2023; border: 1px solid #86aee8; border-radius: 9px; box-shadow: 0 0 0 1px #1c2c50; }
.omnibox svg { width: 10px; height: 10px; }
.omnibox input { flex: 1; min-width: 0; margin-left: -5px; padding: 0; border: 0; background: none; color: #f4f5f6; font-size: 8px; font-weight: 500; outline: 0; }
.extensions { display: flex; gap: 9px; padding: 0 5px 0 8px; }
.extensions svg { width: 10px; height: 10px; }
.extensions button:last-child svg { width: 12px; height: 12px; }
.addressbar > .update { width: 53px; height: 17px; margin: 0; gap: 6px; border: 1px solid #b3776f; border-radius: 9px; color: #e58b83; }

/* title and menus */
.apphead { height: 40px; flex-shrink: 0; display: flex; align-items: flex-start; padding: 5px 9px 0 9px; border-bottom: 1px solid #e0e0e0; }
.logo { width: 20px; height: 22px; margin: 4px 12px 0 0; }
.titles { flex: 1; }
.doctitle { display: block; font-size: 10px; font-weight: 500; line-height: 14px; }
.menubar { display: flex; align-items: center; gap: 9px; height: 19px; font-size: 8px; font-weight: 500; padding-top: 1px; }
.unsaved { height: 15px; padding: 0 4px; gap: 3px; background: #eb9a3c; border: 1px solid #dd9035; color: #5c3a0f; border-radius: 1px; font-size: 7px; }
.unsaved svg { width: 9px; height: 9px; }
.share { width: 47px; height: 19px; margin: 10px 10px 0 0; gap: 3px; background: #ef8b20; border: 1px solid #d77b18; border-radius: 1px; font-weight: 700; }
.share svg { width: 9px; height: 9px; }
.lang svg { width: 10px; height: 10px; margin-top: -1px; }
.toolbar { height: 22px; flex-shrink: 0; display: flex; align-items: center; padding: 0 9px 0 8px; border-bottom: 1px solid #dedede; }
.group { display: flex; align-items: center; height: 12px; padding: 0 4px; border-right: 1px solid #e4e4e4; }
.group.wide { padding: 0 5px 0 8px; }
.group.snug { padding: 0 6px 0 1px; }
.group.last { border: 0; }
.group button { width: 18px; height: 18px; }
.group .drop { width: 24px; gap: 3px; }
.group .first { justify-content: flex-start; }
.group .drop + .drop { margin-left: 3px; }
.group .zoom { width: auto; gap: 3px; font-size: 9px; }
.group svg { width: 12px; height: 12px; }
.group .car { width: 6px; height: 6px; }
.tools-right { margin-left: auto; display: flex; gap: 2px; }
.tools-right svg { width: 10px; height: 10px; }

/* workspace */
.work { flex: 1; min-height: 0; display: flex; }
.sidebar { width: 127px; display: flex; flex-direction: column; flex-shrink: 0; }
.palette { flex: 1; min-height: 0; display: flex; overflow: hidden; }
.panes { flex: 1; min-width: 0; }
.vtrack { width: 8px; padding: 2px 3px 0 0; border-left: 1px solid #eee; }
.vthumb { height: 46%; background: #dadadc; border-radius: 0 0 2px 2px; }
.search { display: flex; align-items: center; height: 18px; margin: 8px 5px 4px 4px; padding: 0 3px 0 4px; background: #fff; border: 1px solid #d6d6d6; border-radius: 2px; }
.search input { flex: 1; min-width: 0; border: 0; padding: 0; font-size: 7px; outline: 0; background: none; }
.search svg { width: 8px; height: 8px; }
.results { display: grid; grid-template-columns: repeat(5, 1fr); grid-auto-rows: 20px; margin: 0 6px 6px 5px; }
.results svg { width: 18px; height: 18px; }
.results .blue { color: #5753b8; }
.results .grey { color: #777; }
.section { position: relative; display: flex; align-items: center; height: 21px; margin: 0; padding: 0 6px 0 8px; font-size: 8px; font-weight: 600; border-top: 1px solid #e0e0e0; }
.section::before { content: ""; position: absolute; left: 2px; border: 2px solid transparent; border-left: 3px solid #777; border-right: 0; }
.section.open::before { border: 2px solid transparent; border-top: 3px solid #777; border-bottom: 0; }
.section.open { border-bottom: 1px solid #e0e0e0; height: 22px; }
.sect-tools { margin-left: auto; display: flex; gap: 2px; color: #777; font-weight: 400; }
.sect-tools button { width: 9px; }
.sect-tools svg { width: 8px; height: 8px; }
.scratch { padding: 7px 7px 7px 9px; }
.dropzone { height: 19px; border: 1px dashed #999; border-radius: 5px; display: flex; align-items: center; justify-content: center; color: #888; }
.shapes { display: grid; grid-template-columns: repeat(5, 1fr); grid-template-rows: repeat(9, 1fr); height: 191px; padding: 4px 5px 4px 6px; overflow: hidden; }
.shapes button { min-width: 0; min-height: 0; }
.shapes svg { width: 20px; height: 20px; fill: none; stroke: #222; }
.shapes .mini { font-size: 4px; white-space: nowrap; }
.more { height: 24px; justify-content: flex-start; gap: 3px; padding-left: 8px; border-top: 1px solid #e0e0e0; color: #cc6a1c; font-weight: 600; }
.more b { font-size: 12px; }
.splitter { width: 6px; flex-shrink: 0; border: solid #e4e4e4; border-width: 0 1px; display: flex; align-items: center; justify-content: center; }
.splitter span { width: 3px; height: 4px; background: #999; border-radius: 1px; }
.center { flex: 1; min-width: 0; display: flex; flex-direction: column; }
.canvas { flex: 1; min-height: 0; display: grid; grid-template-columns: 1fr 6px; grid-template-rows: 1fr 7px; background: #f5f9fa; }
.page { width: calc(100% - 127px); height: 100%; margin-left: 64px; background: #fff; border-right: 1px solid #dcdfe0; box-shadow: -1px 0 0 #dcdfe0; min-height: 0; }
.caption { font: 18px "Liberation Sans", Arial, sans-serif; text-anchor: middle; }
.size { font: bold 26px "Liberation Sans", Arial, sans-serif; }
.vscroll { background: #fafafa; padding: 166px 1px 0 0; }
.vscroll div { height: 143px; background: #dddee0; border-radius: 2px; }
.hscroll { grid-column: 1 / -1; background: #fafafa; padding: 1px 291px 1px 280px; }
.hscroll div { height: 5px; background: #dcdee0; border-radius: 2px; }
.pages { height: 24px; flex-shrink: 0; display: flex; background: #eef2f3; border-top: 1px solid #dfe3e4; color: #666; }
.pages button { flex: 1 1 0; min-width: 0; border-right: 1px solid #e6eaeb; font-weight: 500; }
.pages .on { background: #fff; color: #c8640f; font-weight: 700; }
.pages .pmenu { flex: 0 0 17px; font-size: 12px; }
.pages .padd { flex: 0 0 17px; }
.padd svg { width: 10px; height: 10px; }

/* format panel */
.format { width: 145px; flex-shrink: 0; border-left: 1px solid #dcdcdc; color: #555; }
.ftabs { display: flex; height: 21px; }
.ftabs button { flex: 64 1 0; background: #eff0f1; border-bottom: 1px solid #dcdcdc; border-right: 1px solid #dcdcdc; font-weight: 600; }
.ftabs .on { background: none; border-bottom: 0; }
.ftabs .fclose { flex: 0 0 16px; border-right: 0; }
.fclose svg { width: 8px; height: 8px; }
.format section { padding: 6px 9px 8px 8px; border-bottom: 1px solid #e0e0e0; }
.format .view { padding: 7px 9px 9px 8px; }
.format h3 { margin: 0 0 2px; font-size: 8px; line-height: 12px; font-weight: 600; }
.row { display: flex; align-items: center; height: 14px; }
.row label { display: flex; align-items: center; gap: 4px; flex: 1; }
.format input[type=checkbox] { appearance: none; width: 8px; height: 8px; border: 1px solid #777; border-radius: 1px; background: #fff; }
.format input[type=checkbox]:checked { border-color: #0a62c4; background: url("data:image/svg+xml,%3Csvg xmlns='http://www.w3.org/2000/svg' viewBox='0 0 8 8'%3E%3Cpath d='M1.500 4l2 2 3-4.300' fill='none' stroke='white' stroke-width='1.300'/%3E%3C/svg%3E") center / 8px 8px #0a62c4; }
.unit { display: flex; align-items: center; }
.unit input { width: 29px; height: 12px; padding: 0 1px; text-align: right; border: 1px solid #aaa; border-radius: 2px; background: #fff; font: 8px "Liberation Sans", Arial, sans-serif; color: #111; }
.unit svg { width: 6px; height: 12px; margin: 0 3px 0 1px; }
.swatch { width: 28px; height: 13px; padding: 2px; border: 1px solid #777; border-radius: 2px; background: #eee; }
.swatch i { flex: 1; height: 7px; background: #ddd; border: 1px solid #333; }
.change { width: 34px; height: 13px; margin-right: 30px; background: #efefef; border: 1px solid #777; border-radius: 2px; color: #111; font: 8px/10px "Liberation Sans", Arial, sans-serif; }
.format select { display: block; width: calc(100% - 3px); height: 11px; padding: 0; border: 1px solid #888; border-radius: 2px; background: #fff; font: 8px/9px "Liberation Sans", Arial, sans-serif; color: #111; }
.format .paper { padding: 5px 9px 10px 8px; }
.radios { display: flex; gap: 4px; padding: 4px 0 0 5px; }
.radios label { display: flex; align-items: center; gap: 3px; }
.radios input { width: 9px; height: 9px; }
.format .actions { display: flex; flex-direction: column; gap: 1px; padding-top: 7px; }
.actions button { height: 12px; background: #efefef; border: 1px solid #888; border-radius: 2px; font: 8px/10px "Liberation Sans", Arial, sans-serif; color: #111; }

/* downloads shelf */
.downloads { height: 34px; flex-shrink: 0; display: flex; align-items: center; padding: 0 7px 0 2px; background: #2f2e32; color: #f2f2f2; font-weight: 500; }
.dl { flex: 0 1 140px; min-width: 0; height: 26px; display: flex; align-items: center; gap: 8px; padding: 0 10px 0 11px; border-right: 1px solid #56565a; }
.dl a { flex: 1; min-width: 0; white-space: nowrap; }
.dl svg { width: 8px; height: 8px; }
.dl .fi { height: 10px; }
.showall { margin-left: auto; margin-right: 16px; color: #7ba6ee; font-weight: 400; }
.dlclose svg { width: 8px; height: 8px; }
```
